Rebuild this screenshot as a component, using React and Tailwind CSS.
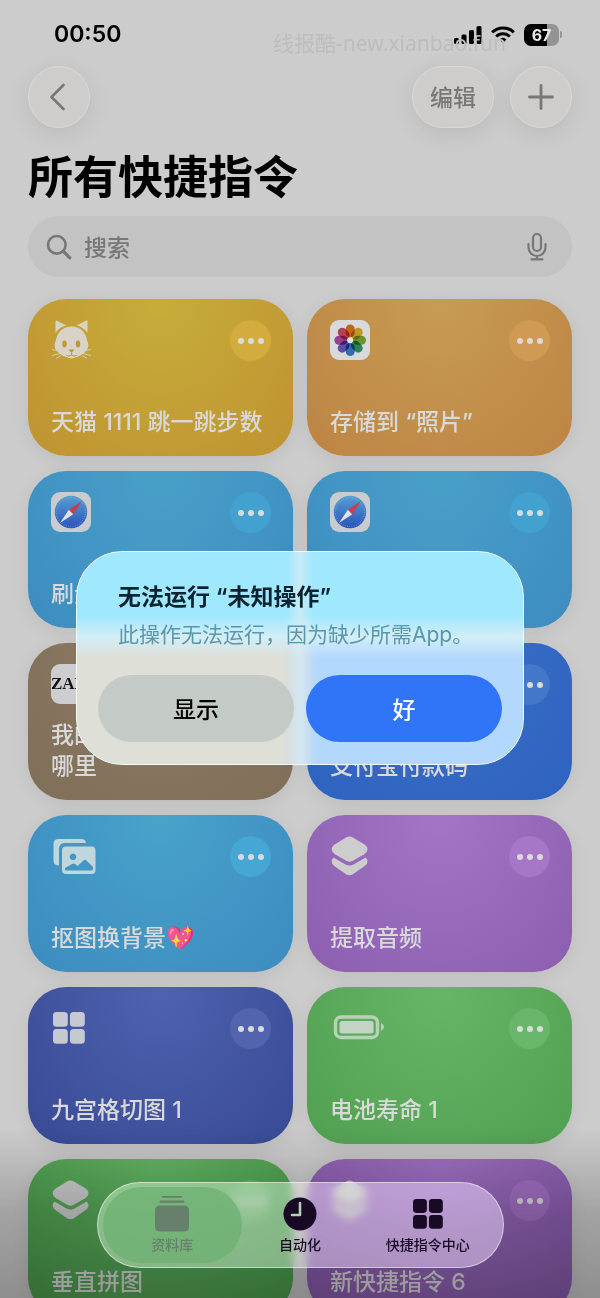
import React from 'react';

const FONT = "font-[Inter,'Noto_Sans_CJK_SC',sans-serif]";

// Card icons

const CatIcon = () => (
  <svg viewBox="0 0 40 40" className="h-10 w-10" fill="#d8d3c6">
    <path d="M4.500 13V1.600Q4.500 .2 6 .8l9.500 4.700Q8 7 4.500 13Z" />
    <path d="M36.500 13V1.600Q36.500 .2 35 .8l-9.500 4.700Q33 7 36.500 13Z" />
    <path d="M20.500 6.500C11 6.500 6 13 5 20c-1.800 4-2 7 .5 10.500C9 35 14 37 20.500 38.500 27 37 32 35 35.500 30.500c2.500-3.500 2.300-6.500.5-10.500-1-7-6-13.500-15.500-13.500Z" />
    <ellipse cx="13.500" cy="24" rx="2.200" ry="3.400" fill="#bd9832" />
    <ellipse cx="27" cy="24" rx="2.200" ry="3.400" fill="#bd9832" />
    <path d="M17.500 29.500h6l-3 3.600Z" fill="#bd9832" />
    <path d="M20.500 33v2m-5 .5q2.500 1.500 5-.5 2.500 2 5 .5" fill="none" stroke="#bd9832" />
    <path
      d="M9 31l-8-1.500M9 33.500l-8 2M10 35.500l-5 3M32 31l8-1.500M32 33.500l8 2M31 35.500l5 3"
      fill="none"
      stroke="#d8d3c6"
      strokeWidth=".8"
    />
  </svg>
);

const PETALS = [
  { angle: 0, color: '#e07a1c' },
  { angle: 45, color: '#d9b62c' },
  { angle: 90, color: '#7fae35' },
  { angle: 135, color: '#359a68' },
  { angle: 180, color: '#3e7fce' },
  { angle: 225, color: '#6a5fc0' },
  { angle: 270, color: '#b04bac' },
  { angle: 315, color: '#d84a62' },
];

const PhotosIcon = () => (
  <svg viewBox="0 0 40 40" className="h-10 w-10">
    <rect width="40" height="40" rx="9" fill="#d8d9da" />
    {PETALS.map((petal) => (
      <rect
        key={petal.angle}
        x="15.700"
        y="4.400"
        width="9"
        height="13"
        rx="4.500"
        fill={petal.color}
        className="mix-blend-multiply"
        transform={`rotate(${petal.angle} 20.200 20.200)`}
      />
    ))}
    <circle cx="20.200" cy="20.200" r="2.600" fill="#e4e4e4" />
  </svg>
);

const SafariIcon = () => (
  <svg viewBox="0 0 40 40" className="h-10 w-10">
    <defs>
      <linearGradient id="compass" x1="0" y1="0" x2="0" y2="1">
        <stop offset="0" stopColor="#569fd0" />
        <stop offset="1" stopColor="#2a53bd" />
      </linearGradient>
    </defs>
    <rect width="40" height="40" rx="9" fill="#c9cbce" />
    <circle cx="20" cy="20" r="16.200" fill="url(#compass)" />
    <circle cx="20" cy="20" r="14.500" fill="none" stroke="#8fb4de" strokeWidth="1.200" strokeDasharray=".5 1.770" />
    <path d="M31 9 22.200 22.200 17.800 17.800Z" fill="#c83e4d" />
    <path d="M9 31 17.800 17.800 22.200 22.200Z" fill="#dfe3e8" />
  </svg>
);

const ZaraIcon = () => (
  <div className="flex h-10 w-10 items-center rounded-[9px] bg-[#cdcdcf] font-['Liberation_Serif',serif] text-[17px] font-bold whitespace-nowrap text-[#111]">
    ZARA
  </div>
);

const AlipayIcon = () => <div className="h-10 w-10 rounded-[9px] bg-[#3d77cc]" />;

const PicturesIcon = () => (
  <svg viewBox="0 0 46 40" className="h-10 w-[46px]" fill="#bfd6dc">
    <path d="M7.500 3h23q4 0 4.500 4H14q-6 0-6 6v16.500q-5.500 0-5.500-5V8q0-5 5-5Z" />
    <path
      fillRule="evenodd"
      d="M15 10.500h25.500q4 0 4 4V34q0 4-4 4H15q-4 0-4-4V14.500q0-4 4-4ZM22 17.500a3.300 3.300 0 1 0 .01 0ZM14.500 34.500H41q1 0 1-1.500v-2l-6.500-6.500q-1.500-1.300-3 0l-6 5.500-2.500-2q-1.500-1-3 0L14 32v1.500Z"
    />
  </svg>
);

const ShortcutsIcon = () => (
  <svg viewBox="0 0 40 40" className="h-10 w-10" fill="#cdcdcd">
    <path d="M16.500 1.200q3-1.400 6 0l11.700 7q3.300 2.200 3.300 5t-3.300 5L22.500 25q-3 1.500-6 0L5 18.200Q1.700 16 1.700 13.200t3.300-5Z" />
    <path d="M3.500 21.500 15.500 28.500q4 2 8 0L35.700 21.500q4 4.500-.7 8.200L22.500 38.500q-3 1.500-6 0L4.200 30q-4.700-4-.7-8.500Z" />
  </svg>
);

const SquaresIcon = ({ className = 'h-8 w-8' }) => (
  <svg viewBox="0 0 32 32" className={className} fill="currentColor">
    <rect x="0" y="0" width="14.800" height="14.800" rx="3.500" />
    <rect x="17" y="0" width="14.800" height="14.800" rx="3.500" />
    <rect x="0" y="17" width="14.800" height="14.800" rx="3.500" />
    <rect x="17" y="17" width="14.800" height="14.800" rx="3.500" />
  </svg>
);

const BatteryIcon = () => (
  <svg viewBox="0 0 54 40" className="h-10 w-[54px]">
    <rect x="5.500" y="9" width="42" height="20.500" rx="5.500" fill="none" stroke="#b7d3b7" strokeWidth="3.400" />
    <rect x="9.500" y="13" width="34" height="12.500" rx="2.500" fill="#c4d4c4" />
    <path d="M51 15q3 1.500 3 4t-3 4Z" fill="#b7d3b7" />
  </svg>
);

const CARDS = [
  {
    title: '天猫 1111 跳一跳步数',
    icon: <CatIcon />,
    color: 'bg-[radial-gradient(ellipse_at_50%_0,#c7ad3a,#bf9331)]',
    dots: 'bg-[#d2ac3c]',
  },
  {
    title: '存储到 “照片”',
    icon: <PhotosIcon />,
    color: 'bg-[radial-gradient(ellipse_at_50%_0,#c79c55,#bd8443)]',
    dots: 'bg-[#d09a54]',
  },
  {
    title: '刷步数',
    icon: <SafariIcon />,
    color: 'bg-[radial-gradient(ellipse_at_50%_0,#48a0c8,#3d8cc1)]',
    dots: 'bg-[#43a1cf]',
  },
  {
    title: '刷步数',
    icon: <SafariIcon />,
    color: 'bg-[radial-gradient(ellipse_at_50%_0,#48a0c8,#3d8cc1)]',
    dots: 'bg-[#43a1cf]',
  },
  {
    title: '我的订单在\n哪里',
    icon: <ZaraIcon />,
    color: 'bg-[radial-gradient(ellipse_at_50%_0,#8f7d65,#7f6e58)]',
    dots: 'bg-[#98866e]',
  },
  {
    title: '支付宝付款码',
    icon: <AlipayIcon />,
    color: 'bg-[radial-gradient(ellipse_at_50%_0,#3b70c8,#2e62bf)]',
    dots: 'bg-[#4377c8]',
  },
  {
    title: '抠图换背景💖',
    icon: <PicturesIcon />,
    color: 'bg-[radial-gradient(ellipse_at_50%_0,#48a3ca,#3c8bc0)]',
    dots: 'bg-[#46a6d4]',
  },
  {
    title: '提取音频',
    icon: <ShortcutsIcon />,
    color: 'bg-[radial-gradient(ellipse_at_50%_0,#a475c6,#8b5eb0)]',
    dots: 'bg-[#a676c7]',
  },
  {
    title: '九宫格切图 1',
    icon: <SquaresIcon className="ml-[2px] mt-1 h-8 w-8 text-[#c6c8d2]" />,
    color: 'bg-[radial-gradient(ellipse_at_50%_0,#4f62b0,#384a94)]',
    dots: 'bg-[#5364ae]',
  },
  {
    title: '电池寿命 1',
    icon: <BatteryIcon />,
    color: 'bg-[radial-gradient(ellipse_at_50%_0,#67b668,#51a052)]',
    dots: 'bg-[#69b66b]',
  },
  {
    title: '垂直拼图',
    icon: <ShortcutsIcon />,
    color: 'bg-[radial-gradient(ellipse_at_50%_0,#63b564,#4a9b4b)]',
    dots: 'bg-[#69b66b]',
  },
  {
    title: '新快捷指令 6',
    icon: <ShortcutsIcon />,
    color: 'bg-[radial-gradient(ellipse_at_50%_0,#a070c4,#8659aa)]',
    dots: 'bg-[#a270c3]',
  },
];

const ShortcutCard = ({ title, icon, color, dots }) => (
  <article
    className={`flex h-[157px] flex-col justify-between rounded-[38px] pt-[21px] pr-[22px] pb-[18px] pl-[23px] shadow-[0_4px_18px_rgba(0,0,0,0.08)] ${color}`}
  >
    <div className="flex items-start justify-between">
      {icon}
      <button
        aria-label={`${title} 更多`}
        className={`flex h-[41px] w-[41px] items-center justify-center gap-1 rounded-full ${dots}`}
      >
        <span className="h-1.5 w-1.5 rounded-full bg-[#dadada]" />
        <span className="h-1.5 w-1.5 rounded-full bg-[#dadada]" />
        <span className="h-1.5 w-1.5 rounded-full bg-[#dadada]" />
      </button>
    </div>
    <h2 className="text-[23px] leading-[31px] font-medium whitespace-pre-line text-[#d9d9d9]">{title}</h2>
  </article>
);

const StatusBar = () => (
  <div className="relative flex h-[66px] items-center justify-between pt-[3px] pr-[10px] pl-[26px]">
    <span className="text-[23px] font-semibold text-black">00:50</span>
    <div className="flex items-center gap-[9px]">
      <svg viewBox="0 0 28 20" className="h-5 w-7">
        <rect x="0" y="13" width="5" height="6" rx="1.500" />
        <rect x="7.500" y="9.500" width="5" height="9.500" rx="1.500" />
        <rect x="15" y="5" width="5" height="14" rx="1.500" />
        <rect x="22.500" y="1" width="5" height="18" rx="1.500" />
      </svg>
      <svg viewBox="0 0 24 18" className="h-[18px] w-6" fill="none" stroke="#000" strokeWidth="3">
        <path d="M1.200 6.300a15.500 15.500 0 0 1 21.600 0" />
        <path d="M5.200 10.500a9.800 9.800 0 0 1 13.600 0" />
        <path d="M8.600 13.400a5 5 0 0 1 6.800 0L12 17Z" fill="#000" stroke="none" />
      </svg>
      <div className="flex items-center gap-px">
        <span className="flex h-[22px] w-[35px] items-center justify-center rounded-[7px] bg-[linear-gradient(90deg,#000_67%,#949494_67%)] text-base font-bold text-[#e8e8e8]">
          67
        </span>
        <span className="h-[7px] w-[2px] rounded-r-full bg-[#949494]" />
      </div>
    </div>
    <span className="absolute top-[29px] left-[245px] font-['Noto_Sans','Noto_Sans_CJK_SC',sans-serif] text-[21px] leading-7 whitespace-nowrap text-[#bdbdbd]">
      线报酷-new.xianbao.fun
    </span>
  </div>
);

const glass = 'flex h-[62px] items-center justify-center rounded-full border border-[#dad9d6] bg-[#cecdcb] text-[#777] shadow-[0_6px_24px_rgba(0,0,0,0.09)]';

const Header = () => (
  <header>
    <div className="flex items-center gap-4">
      <button aria-label="返回" className={`${glass} mr-auto w-[62px]`}>
        <svg viewBox="0 0 30 30" className="h-[30px] w-[30px]" fill="none" stroke="currentColor" strokeWidth="2.600" strokeLinecap="round" strokeLinejoin="round">
          <path d="M19.500 3 7.500 15l12 12" />
        </svg>
      </button>
      <button className={`${glass} w-[82px] pt-[2px] text-[23px] font-medium`}>编辑</button>
      <button aria-label="添加" className={`${glass} w-[62px]`}>
        <svg viewBox="0 0 30 30" className="h-[30px] w-[30px]" fill="none" stroke="currentColor" strokeWidth="2.800" strokeLinecap="round">
          <path d="M15 3.500v23M3.500 15h23" />
        </svg>
      </button>
    </div>
    <h1 className="mt-5 text-[45px] leading-[60px] font-bold text-black">所有快捷指令</h1>
    <div className="mt-2 flex h-[61px] items-center rounded-full bg-[#c3c3c4] pr-[22px] pl-[18px] text-[#777]">
      <svg viewBox="0 0 26 26" className="h-[26px] w-[26px]" fill="none" stroke="currentColor" strokeWidth="2.600" strokeLinecap="round">
        <circle cx="10.800" cy="10.800" r="8.800" />
        <path d="m17.500 17.500 6.300 6.300" strokeWidth="3.200" />
      </svg>
      <input
        type="search"
        aria-label="搜索"
        placeholder="搜索"
        className="ml-3 min-w-0 flex-1 bg-transparent pt-[3px] text-[23px] font-medium outline-none placeholder:text-[#777]"
      />
      <button aria-label="语音输入">
        <svg viewBox="0 0 26 30" className="h-[30px] w-[26px]" fill="none" stroke="currentColor" strokeWidth="2.200" strokeLinecap="round">
          <rect x="9" y="2" width="8" height="17" rx="4" />
          <path d="M4.500 12v3.500a8.500 8.500 0 0 0 17 0V12M13 24v3.300M7.500 27.300h11" />
        </svg>
      </button>
    </div>
  </header>
);

const AlertDialog = () => (
  <div className="fixed inset-0 flex items-center justify-center p-4 pt-[34px]">
    <div
      role="alertdialog"
      aria-labelledby="alert-title"
      aria-describedby="alert-text"
      className="w-full max-w-[448px] rounded-[46px] border border-[#effafa] bg-[linear-gradient(90deg,transparent_47%,#dcecf3b0_50%,transparent_53%),linear-gradient(180deg,#a0e8fe_30%,#d3eef6_40%,#d9eef200_50%),linear-gradient(90deg,#dedfd6_46%,#b3d8fe_54%)] px-[21px] pt-[30px] pb-[22px]"
    >
      <h2 id="alert-title" className="px-5 text-[23px] leading-[30px] font-semibold text-[#0b2330]">
        无法运行 “未知操作”
      </h2>
      <p id="alert-text" className="mt-2 px-5 text-[21px] leading-[29px] text-[#5c96ab]">
        此操作无法运行，因为缺少所需App。
      </p>
      <div className="mt-[26px] grid grid-cols-2 gap-3 text-[23px] font-medium">
        <button className="h-[67px] rounded-full bg-[#c4cac5] pt-[3px] text-black">显示</button>
        <button className="h-[67px] rounded-full bg-[#3074f8] pt-[3px] text-white">好</button>
      </div>
    </div>
  </div>
);

const TABS = [
  {
    label: '资料库',
    active: true,
    icon: (
      <svg viewBox="0 0 34 36" className="h-9 w-[34px]" fill="currentColor">
        <rect x="7" y="0" width="20" height="1.800" rx=".9" />
        <rect x="4.500" y="4.500" width="25" height="2.200" rx="1.100" />
        <rect x="0" y="9.500" width="34" height="26" rx="4.500" />
      </svg>
    ),
  },
  {
    label: '自动化',
    icon: (
      <svg viewBox="0 0 36 36" className="h-9 w-9">
        <circle cx="18" cy="18" r="16.500" fill="currentColor" />
        <path d="M18 7v12h-8" fill="none" stroke="#b9cdbb" strokeWidth="2.600" strokeLinecap="round" strokeLinejoin="round" />
      </svg>
    ),
  },
  {
    label: '快捷指令中心',
    icon: <SquaresIcon className="my-[3px] h-[30px] w-[30px]" />,
  },
];

const TabBar = () => (
  <nav className="fixed inset-x-0 bottom-[30px] flex justify-center">
    <div className="grid h-[86px] w-[407px] grid-cols-3 rounded-full border border-white/50 bg-white/40 px-[11px] py-1 backdrop-blur-xs backdrop-brightness-105 backdrop-saturate-125">
      {TABS.map((tab) => (
        <button
          key={tab.label}
          className={`-mx-1.5 flex flex-col items-center justify-center gap-[3px] rounded-full text-sm leading-5 font-medium ${
            tab.active ? 'bg-[#6fb273]/80 text-[#67806b]' : 'text-[#180a24]'
          }`}
        >
          {tab.icon}
          {tab.label}
        </button>
      ))}
    </div>
  </nav>
);

export default function App() {
  return (
    <div className={`h-screen overflow-hidden bg-[#cccccc] ${FONT}`}>
      <main className="px-7">
        <StatusBar />
        <Header />
        <section className="mt-[22px] grid grid-cols-2 gap-x-[14px] gap-y-[15px]">
          {CARDS.map((card, index) => (
            <ShortcutCard key={index} {...card} />
          ))}
        </section>
      </main>
      <div className="pointer-events-none fixed inset-x-0 bottom-0 h-[170px] bg-linear-to-b from-transparent via-black/20 to-black/30" />
      <TabBar />
      <AlertDialog />
    </div>
  );
}
